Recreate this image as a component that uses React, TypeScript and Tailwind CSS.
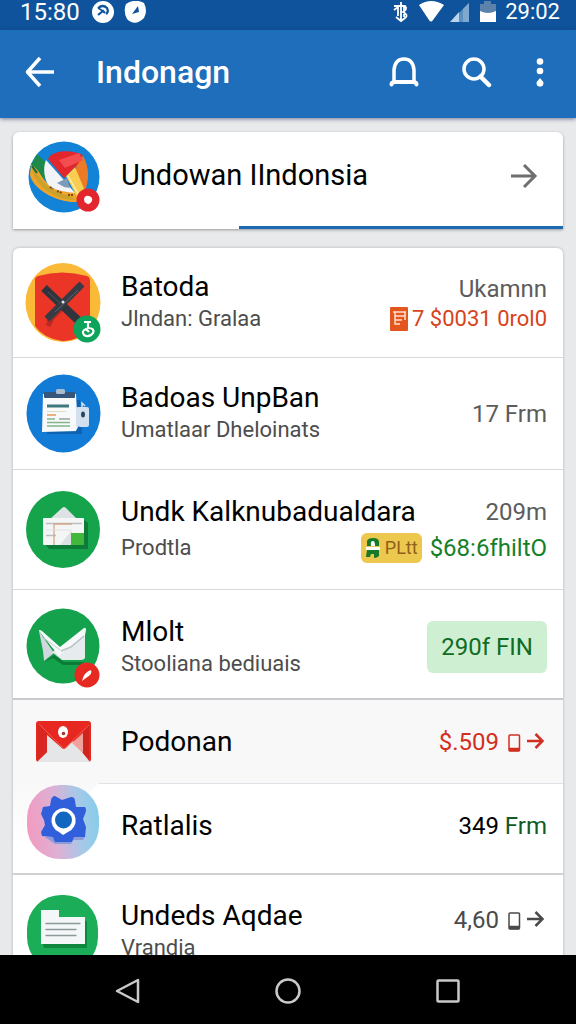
import type { ReactNode } from "react"

type Row = {
  id: string
  title: string
  subtitle?: string
  icon: ReactNode
  trailing: ReactNode
  className: string
  textClass?: string
}

const amountClass = "text-2xl leading-8 text-[#5c5c5c]"

function BrandIcon() {
  return (
    <svg viewBox="0 0 76 78" className="block w-[76px] h-[78px] overflow-visible" aria-hidden="true">
      <circle cx="38" cy="37" r="35.5" fill="#1283d6" />
      <path d="M4 27 L11 14 L24 26 L18 40 Z" fill="#1d8a4a" />
      <path d="M5 25 C14 28 17 45 30 49 L53 53 L52 62 C30 63 7 49 4 35 Z" fill="#f0a32a" />
      <path d="M5 25 C13 38 24 53 44 56 L50 60 C28 60 8 46 5 25Z" fill="#c9a22a" />
      <path d="M20 20 L37 39 L49 53 C37 52 24 49 21 43 C18 36 17 27 20 20Z" fill="#f2f4f8" />
      <path d="M31 43 L41 38 L44 48 L38 47Z" fill="#7d9cba" />
      <path d="M51 20 L57 16 C63 26 64 40 58 53 L48 47Z" fill="#ee7a25" />
      <path d="M40 36 L49 27 L59 51 L52 59Z" fill="#f8cd50" />
      <path d="M42 36 L54 57" stroke="#fff0b5" strokeWidth="1.5" />
      <path d="M22 19 C26 10 45 9 57 15 L52 24 L38 38 Z" fill="#e3262c" />
      <path d="M33 20 L53 13 L57 20 L39 28Z" fill="#f24d50" />
      <path d="M6 26 l5 7" stroke="#17653a" strokeWidth="2" />
      <path d="M24 47 l3 2 M31 51 l5 2 M42 55 l5 0" stroke="#7b4a17" strokeWidth="2" strokeDasharray="2 1" />
      <circle cx="62" cy="60" r="11.5" fill="#e3262e" />
      <path d="M58 59 q1-4 5-3 q4 1 3 5 q-3 5-6 2 q-2-1-2-4Z" fill="#fff" />
    </svg>
  )
}

function CrossedIcon() {
  return (
    <svg viewBox="0 0 76 78" className="block w-[76px] h-[78px] overflow-visible" aria-hidden="true">
      <ellipse cx="37" cy="38.500" rx="37.500" ry="39.500" fill="#fbb938" />
      <path d="M9 16 Q9 13 12 12 Q36 5 61 12 Q64 13 64 17 V61 Q55 77 36 77 Q17 74 9 62 Z" fill="#ea3527" />
      <path d="M22 58 L36 44 M25 56 L22 62" stroke="#b92a22" strokeWidth="5" />
      <path d="M18 24 L56 60" stroke="#30343c" strokeWidth="8" />
      <path d="M56 20 L21 55" stroke="#363b44" strokeWidth="7" />
      <path d="M52 26 L29 48" stroke="#596573" strokeWidth="1" />
      <path d="M22 28 L34 39" stroke="#4d545f" strokeWidth="1" />
      <circle cx="37" cy="38" r="1.500" fill="#dfe5ea" />
      <circle cx="61" cy="65" r="13.500" fill="#0da35a" />
      <path d="M58 58 h7 M62 58 v6 q7 0 5 5 q-4 5-9 2 q-3-4 2-6 l3 3" fill="none" stroke="#fff" strokeWidth="2.200" />
    </svg>
  )
}

function ClipboardIcon() {
  return (
    <svg viewBox="0 0 76 78" className="block w-[76px] h-[78px] overflow-visible" aria-hidden="true">
      <ellipse cx="37.500" cy="38.500" rx="37" ry="39" fill="#127bd6" />
      <path d="M20 25 H54 L56 59 H21Z" fill="#0d62b1" />
      <path d="M17 19 H50 L52 56 L16 57Z" fill="#f7f9fa" />
      <rect x="18" y="17" width="31" height="6" rx="1" fill="#34577b" />
      <rect x="30" y="14" width="9" height="5" rx="1.500" fill="#a9bdcf" />
      <path d="M21 31 H43" stroke="#3f7780" strokeWidth="3" />
      <path d="M21 36.500 H40" stroke="#dfdcca" strokeWidth="1" />
      <path d="M21 40 H30" stroke="#eb9654" strokeWidth="1.500" />
      <path d="M21 44 H29 M21 47.500 H44 M21 51 H44" stroke="#83b789" strokeWidth="1.300" />
      <path d="M33 44 H44" stroke="#8c9491" strokeWidth="1.300" />
      <rect x="50" y="32" width="13" height="20" rx="2" fill="#d3e0ef" />
      <path d="M56 32 V28 L59 31" fill="none" stroke="#d3e0ef" strokeWidth="1.500" />
      <path d="M54 52 L51 57" stroke="#0d62b1" strokeWidth="3" />
      <ellipse cx="57" cy="39.500" rx="2" ry="3" fill="#2b4560" />
    </svg>
  )
}

function LedgerIcon() {
  return (
    <svg viewBox="0 0 76 78" className="block w-[76px] h-[78px] overflow-visible" aria-hidden="true">
      <ellipse cx="37" cy="38.500" rx="37" ry="38.500" fill="#15a34c" />
      <path d="M20 54 H58 V29 L62 32 V58 H23Z" fill="#0d7a38" />
      <path d="M24 28 L36 17 Q38 15 40 17 L51 28Z" fill="#dde3e5" />
      <rect x="17" y="27" width="41" height="27" rx="1" fill="#f4f5f5" />
      <path d="M20 32.500 H56 M20 44.500 H30" stroke="#b9bfc2" strokeWidth="1.300" />
      <path d="M28 54 V33 H46" fill="none" stroke="#d7a987" strokeWidth="1.300" />
      <path d="M20 39 H45" stroke="#dfe2e3" strokeWidth="1" />
      <path d="M34 54 L46 39 V54Z" fill="#dce1e4" />
      <rect x="45" y="42" width="13" height="12" fill="#41b83b" />
    </svg>
  )
}

function EnvelopeIcon() {
  return (
    <svg viewBox="0 0 76 78" className="block w-[76px] h-[78px] overflow-visible" aria-hidden="true">
      <ellipse cx="37" cy="41" rx="36.500" ry="37.500" fill="#15a24c" />
      <path d="M18 57 L28 50 L38 57 H58 L55 60 H37 L27 53Z" fill="#0d7a38" />
      <path d="M13 26 L17 46 L18 56 L28 48Z" fill="#cfd8dc" />
      <path d="M34 42 L59 28 V53 Q58 55 55 55 H36 L26 47Z" fill="#e6ebed" />
      <path d="M13 26 Q13 24 16 26 L34 42 L58 23 Q60 22 60 25 L59 30 L38 46 L33 51Z" fill="#f7f9f9" />
      <path d="M35 46 L45 42 L58 31" fill="none" stroke="#b7c4ca" strokeWidth="1.500" />
      <path d="M18 33 L34 45" stroke="#c5d0d4" strokeWidth="1" />
      <circle cx="61" cy="70" r="12.500" fill="#e62a22" />
      <path d="M56 76 Q58 67 65 65 Q67 69 60 73Z" fill="#fff" />
    </svg>
  )
}

function MailIcon() {
  return (
    <svg viewBox="0 0 56 42" className="block w-[56px] h-[42px] mx-[10px]" aria-hidden="true">
      <rect width="55" height="41" rx="3" fill="#e72820" />
      <path d="M11 14 L27 28 L37 20 L54 41 H1 L11 31Z" fill="#e5e6e8" />
      <path d="M36 22 L47 12 V32Z" fill="#f0a39d" />
      <path d="M2 2 L11 12 V31 L1 40Z" fill="#d82720" />
      <path d="M47 12 L53 3 V38 L47 32Z" fill="#cf241d" />
      <path d="M3 2 L27 27 Q28 28 30 27 L53 3 Q52 1 50 1 H5Z" fill="#e72820" />
      <path d="M3 3 L28 28 L53 4" fill="none" stroke="#f25b50" strokeWidth="1" />
      <ellipse cx="27" cy="11" rx="5" ry="6" fill="#fff" />
      <circle cx="27.500" cy="12.500" r="1.800" fill="#a5332d" />
    </svg>
  )
}

function GearIcon() {
  return (
    <svg viewBox="0 0 76 78" className="block w-[76px] h-[78px]" aria-hidden="true">
      <defs>
        <linearGradient id="gearFill" x1="0" y1=".55" x2="1" y2=".45">
          <stop offset="0" stopColor="#f39ac0" />
          <stop offset=".4" stopColor="#dcb1d5" />
          <stop offset=".75" stopColor="#a4c9e9" />
          <stop offset="1" stopColor="#86cdea" />
        </linearGradient>
      </defs>
      <rect x="1" y="2" width="72" height="74" rx="33" fill="url(#gearFill)" />
      <path d="M19 54 H59 L57 57 H47 L45 61 H29Z" fill="#8e9bd9" />
      <path d="M25 17 Q26 13 29 13 L36 17 L45 14 Q49 14 49 18 L50 24 L59 24 Q61 27 59 31 L57 36 L60 44 L59 54 L48 54 L46 59 H29 L27 54 L16 53 L15 49 L19 42 L18 37 L15 31 L17 24 L24 23Z" fill="#315fdc" />
      <path d="M38 25 a12.500 12.500 0 0 1 4 24 L37 52 L33 49 A12.500 12.500 0 0 1 38 25Z" fill="#fff" />
      <circle cx="37.500" cy="37" r="8.500" fill="#1266c0" />
    </svg>
  )
}

function FolderIcon() {
  return (
    <svg viewBox="0 0 76 78" className="block w-[76px] h-[78px]" aria-hidden="true">
      <rect x="1" y="2" width="71" height="76" rx="34" fill="#1bad58" />
      <path d="M17 51 H59 V27 L61 29 V55 H18Z" fill="#0f873f" />
      <path d="M15 17 H33 V24 H59 V51 H15Z" fill="#f3f7f7" />
      <path d="M20 30.500 H54 M20 36.500 H50 M20 42.500 H50" stroke="#8e989b" strokeWidth="1.300" strokeLinecap="round" />
    </svg>
  )
}

function StatusBar() {
  return (
    <div className="flex h-[30px] items-center justify-between bg-[#0e539b] pl-5 pr-4 pb-1.5 text-white">
      <div className="flex items-center gap-3">
        <span className="text-2xl leading-6">15:80</span>
        <svg viewBox="0 0 54 22" className="w-[54px] h-[22px]" aria-hidden="true">
          <circle cx="11" cy="11" r="11" fill="#fff" />
          <path d="M6 7 q5-4 9 0 q2 4-1 6 M6 14 l5-4 2 2" fill="none" stroke="#0e539b" strokeWidth="2.200" />
          <path d="M6 7 l5 3" stroke="#0e539b" strokeWidth="1.500" />
          <path d="M34 3 Q43-3 52 2 Q56 10 52 17 Q43 26 35 18 Q31 10 34 3Z" fill="#fff" />
          <path d="M46 5 L47 11 L40 13Z" fill="#0e539b" />
        </svg>
      </div>
      <div className="flex items-center gap-2">
        <svg viewBox="0 0 104 24" className="w-[104px] h-6" aria-hidden="true">
          <path d="M8 2 V21 M3 6 H12 Q15 9 10 12 Q16 15 12 18 L8 21 L3 17 M1 10 L5 7 V16 M1 6 H6 M11 7 V17" fill="none" stroke="#fff" strokeWidth="1.800" />
          <path d="M26 5 Q38-3 51 5 L40 20 Q38 23 36 20Z" fill="#fff" />
          <path d="M66 13 L76 3 V22 H66Z" fill="#5c8fc1" />
          <path d="M57 22 L66 12 V22Z" fill="#b9d4ec" />
          <path d="M70 9 L76 3 V22 H70Z" fill="#7fa9d1" />
          <path d="M91 1 H98 V4 H103 V13 H87 V4 H91Z" fill="#5c82ab" />
          <path d="M87 11 Q95 15 103 11 V22 H87Z" fill="#fff" />
        </svg>
        <span className="text-[22px] leading-6">29:02</span>
      </div>
    </div>
  )
}

function AppBar() {
  return (
    <header className="relative z-10 flex h-[88px] items-center bg-[#1f6ebb] pl-6 pr-7 pb-1 text-white shadow-[0_1px_4px_rgba(40,50,90,0.6)]">
      <button type="button" aria-label="Back">
        <svg viewBox="0 0 32 32" className="block size-8" fill="none" stroke="#fff" strokeWidth="3.500" aria-hidden="true">
          <path d="M30 16 H4 M16 2 L3.500 16 L16 30" strokeLinejoin="round" />
        </svg>
      </button>
      <h1 className="ml-10 flex-1 text-[32px] leading-10 font-medium">Indonagn</h1>
      <div className="flex items-center gap-10">
        <button type="button" aria-label="Notifications">
          <svg viewBox="0 0 32 32" className="block size-8" fill="none" stroke="#fff" strokeWidth="3.500" aria-hidden="true">
            <path d="M6 26 V14 Q7 3 16 3 Q25 3 26 14 V26" />
            <path d="M3.500 28.500 Q3.500 26 7 26 H25 Q28.500 26 28.500 28.500" strokeLinecap="round" strokeWidth="4" />
          </svg>
        </button>
        <button type="button" aria-label="Search">
          <svg viewBox="0 0 32 32" className="block size-8" fill="none" stroke="#fff" aria-hidden="true">
            <circle cx="14" cy="13" r="10" strokeWidth="3.500" />
            <path d="M20.500 20.500 L29 29" strokeWidth="4.500" strokeLinecap="round" />
          </svg>
        </button>
        <button type="button" aria-label="More options">
          <svg viewBox="0 0 16 32" className="block w-4 h-8" fill="#fff" aria-hidden="true">
            <circle cx="8" cy="5.500" r="3.300" />
            <circle cx="8" cy="15" r="3.300" />
            <path d="M8 22 L11.300 26 A3.500 3.500 0 1 1 4.700 26Z" />
          </svg>
        </button>
      </div>
    </header>
  )
}

function DeviceArrow() {
  return (
    <svg viewBox="0 0 40 24" className="w-10 h-6" fill="none" stroke="currentColor" aria-hidden="true">
      <rect x="2" y="5" width="10.500" height="16" rx="1" strokeWidth="1.500" />
      <path d="M2 19.500 H12.500" strokeWidth="3.500" />
      <path d="M20 11 H35 M28.500 4 L35.500 11 L28.500 18" strokeWidth="2.500" />
    </svg>
  )
}

const rows: Row[] = [
  {
    id: "batoda",
    title: "Batoda",
    subtitle: "Jlndan: Gralaa",
    icon: <CrossedIcon />,
    className: "h-[110px] border-b border-[#d6d8db]",
    trailing: (
      <div className="flex flex-col items-end">
        <span className={amountClass}>Ukamnn</span>
        <span className="flex items-center gap-1 text-[22px] leading-7 text-[#d7431b]">
          <svg viewBox="0 0 18 24" className="w-[18px] h-6" aria-hidden="true">
            <rect width="18" height="24" rx="1" fill="#e3571f" />
            <path d="M3 5 H16 M5 5 V17 H10 M5 9 H15 M5 13 H12 M15 5 V13" fill="none" stroke="#ffe1cd" strokeWidth="1.500" />
          </svg>
          7 $0031 0rol0
        </span>
      </div>
    ),
  },
  {
    id: "badoas",
    title: "Badoas UnpBan",
    subtitle: "Umatlaar Dheloinats",
    icon: <ClipboardIcon />,
    className: "h-[112px] border-b border-[#d6d8db]",
    trailing: <span className={amountClass}>17 Frm</span>,
  },
  {
    id: "undk",
    title: "Undk Kalknubadualdara",
    subtitle: "Prodtla",
    icon: <LedgerIcon />,
    className: "h-[120px] border-b border-[#d6d8db]",
    textClass: "gap-1",
    trailing: (
      <div className="flex flex-col items-end gap-1">
        <span className={amountClass}>209m</span>
        <span className="flex items-center gap-2 text-2xl leading-8 text-[#15802a]">
          <span className="flex h-[30px] items-center gap-1 rounded-md bg-[#edc84e] px-1 text-lg text-[#8f601a]">
            <svg viewBox="0 0 16 20" className="w-4 h-5" aria-hidden="true">
              <path d="M2 8 V3 Q3 0 8 0 Q14 0 14 4 V8Z M2 12 H14 V18 Q12 20 9 20 V16 H6 L5 19 H1Z" fill="#167a28" />
              <path d="M6 8 Q5 3 8 3 Q10 3 10 8Z M1 9 H15 V12 H1Z" fill="#fff" />
            </svg>
            <span>PLtt</span>
          </span>
          $68:6fhiltO
        </span>
      </div>
    ),
  },
  {
    id: "mlolt",
    title: "Mlolt",
    subtitle: "Stooliana bediuais",
    icon: <EnvelopeIcon />,
    className: "h-[110px] border-b-2 border-[#c9cacd]",
    textClass: "pt-2",
    trailing: (
      <span className="mt-1.5 rounded-md bg-[#cfefd3] px-3.5 py-2 text-2xl leading-9 text-[#106c25]">290f FIN</span>
    ),
  },
  {
    id: "podonan",
    title: "Podonan",
    icon: <MailIcon />,
    className: "h-[83px] bg-[#f8f8f9]",
    trailing: (
      <span className="flex items-center gap-2 text-2xl leading-8 text-[#d32f20]">
        $.509
        <DeviceArrow />
      </span>
    ),
  },
  {
    id: "ratlalis",
    title: "Ratlalis",
    icon: <GearIcon />,
    className: "h-[92px] border-b-2 border-[#cfd1d3] pb-1",
    trailing: (
      <span className="text-2xl leading-8 text-black">
        349 <span className="text-[#0f5a26]">Frm</span>
      </span>
    ),
  },
  {
    id: "undeds",
    title: "Undeds Aqdae",
    subtitle: "Vrandia",
    icon: <FolderIcon />,
    className: "h-[114px]",
    trailing: (
      <span className="flex items-center gap-2 pb-6 text-2xl leading-8 text-[#4a4a4a]">
        4,60
        <DeviceArrow />
      </span>
    ),
  },
]

function ListRow({ row }: { row: Row }) {
  const notched = row.id === "ratlalis"
  return (
    <li>
      <a href={`#${row.id}`} className={`relative flex items-center pl-[13px] pr-4 ${row.className}`}>
        {notched && (
          <>
            <span className="absolute left-0 top-0 h-16 w-[86px] bg-linear-to-b from-[#f8f8f9] to-white [clip-path:polygon(0_0,100%_0,75px_11px,40px_64px,0_64px)]" />
            <span className="absolute left-[86px] right-0 top-0 h-px bg-[#e0e3e7]" />
          </>
        )}
        <span className={`relative shrink-0 ${notched ? "pb-2" : ""}`}>{row.icon}</span>
        <span className={`ml-[19px] flex flex-1 flex-col whitespace-nowrap ${row.textClass ?? ""}`}>
          <span className="text-[28px] leading-8 text-black">{row.title}</span>
          {row.subtitle && <span className="text-[22px] leading-8 text-[#4d4d4d]">{row.subtitle}</span>}
        </span>
        {/* zero width lets the amount run under a long title */}
        <span className="flex w-0 shrink-0 justify-end whitespace-nowrap">{row.trailing}</span>
      </a>
    </li>
  )
}

export default function App() {
  return (
    <div className="flex h-screen flex-col overflow-hidden bg-[#e8e9eb] font-[Roboto,sans-serif]">
      <StatusBar />
      <AppBar />
      <main className="min-h-0 flex-1 space-y-[19px] overflow-y-auto px-[13px] pt-[14px] [scrollbar-width:none]">
        <section className="rounded-t-md bg-white shadow-[0_1px_3px_rgba(0,0,0,0.35)]">
          <a href="#undowan" className="flex h-[94px] items-center pl-[13px] pr-6">
            <BrandIcon />
            <span className="ml-[19px] flex-1 pb-2 text-[29px] leading-9 text-black">Undowan IIndonsia</span>
            <svg viewBox="0 0 28 28" className="mb-1 size-7" fill="none" stroke="#6e6e6e" strokeWidth="3" aria-hidden="true">
              <path d="M0 13 H24 M13 2 L24 13 L13 24" />
            </svg>
          </a>
          <div className="ml-auto h-[3px] w-[59%] bg-[#1f68b2]" />
        </section>
        <ul className="rounded-t-md bg-white shadow-[0_0_3px_rgba(0,0,0,0.25)]">
          {rows.map(row => <ListRow key={row.id} row={row} />)}
        </ul>
      </main>
      <nav className="flex h-[69px] shrink-0 items-center justify-center gap-32 bg-black pt-0.5 text-[#c9c9c9]">
        <button type="button" aria-label="Back">
          <svg viewBox="0 0 32 32" className="block size-8" fill="none" stroke="currentColor" strokeWidth="2.500" strokeLinejoin="round" aria-hidden="true">
            <path d="M26 5 V27 L5 16Z" />
          </svg>
        </button>
        <button type="button" aria-label="Home">
          <svg viewBox="0 0 32 32" className="block size-8" fill="none" stroke="currentColor" strokeWidth="2.500" aria-hidden="true">
            <circle cx="16" cy="16" r="11.500" />
          </svg>
        </button>
        <button type="button" aria-label="Recent apps">
          <svg viewBox="0 0 32 32" className="block size-8" fill="none" stroke="currentColor" strokeWidth="2.500" aria-hidden="true">
            <rect x="5.500" y="5.500" width="21" height="21" rx="1" />
          </svg>
        </button>
      </nav>
    </div>
  )
}
